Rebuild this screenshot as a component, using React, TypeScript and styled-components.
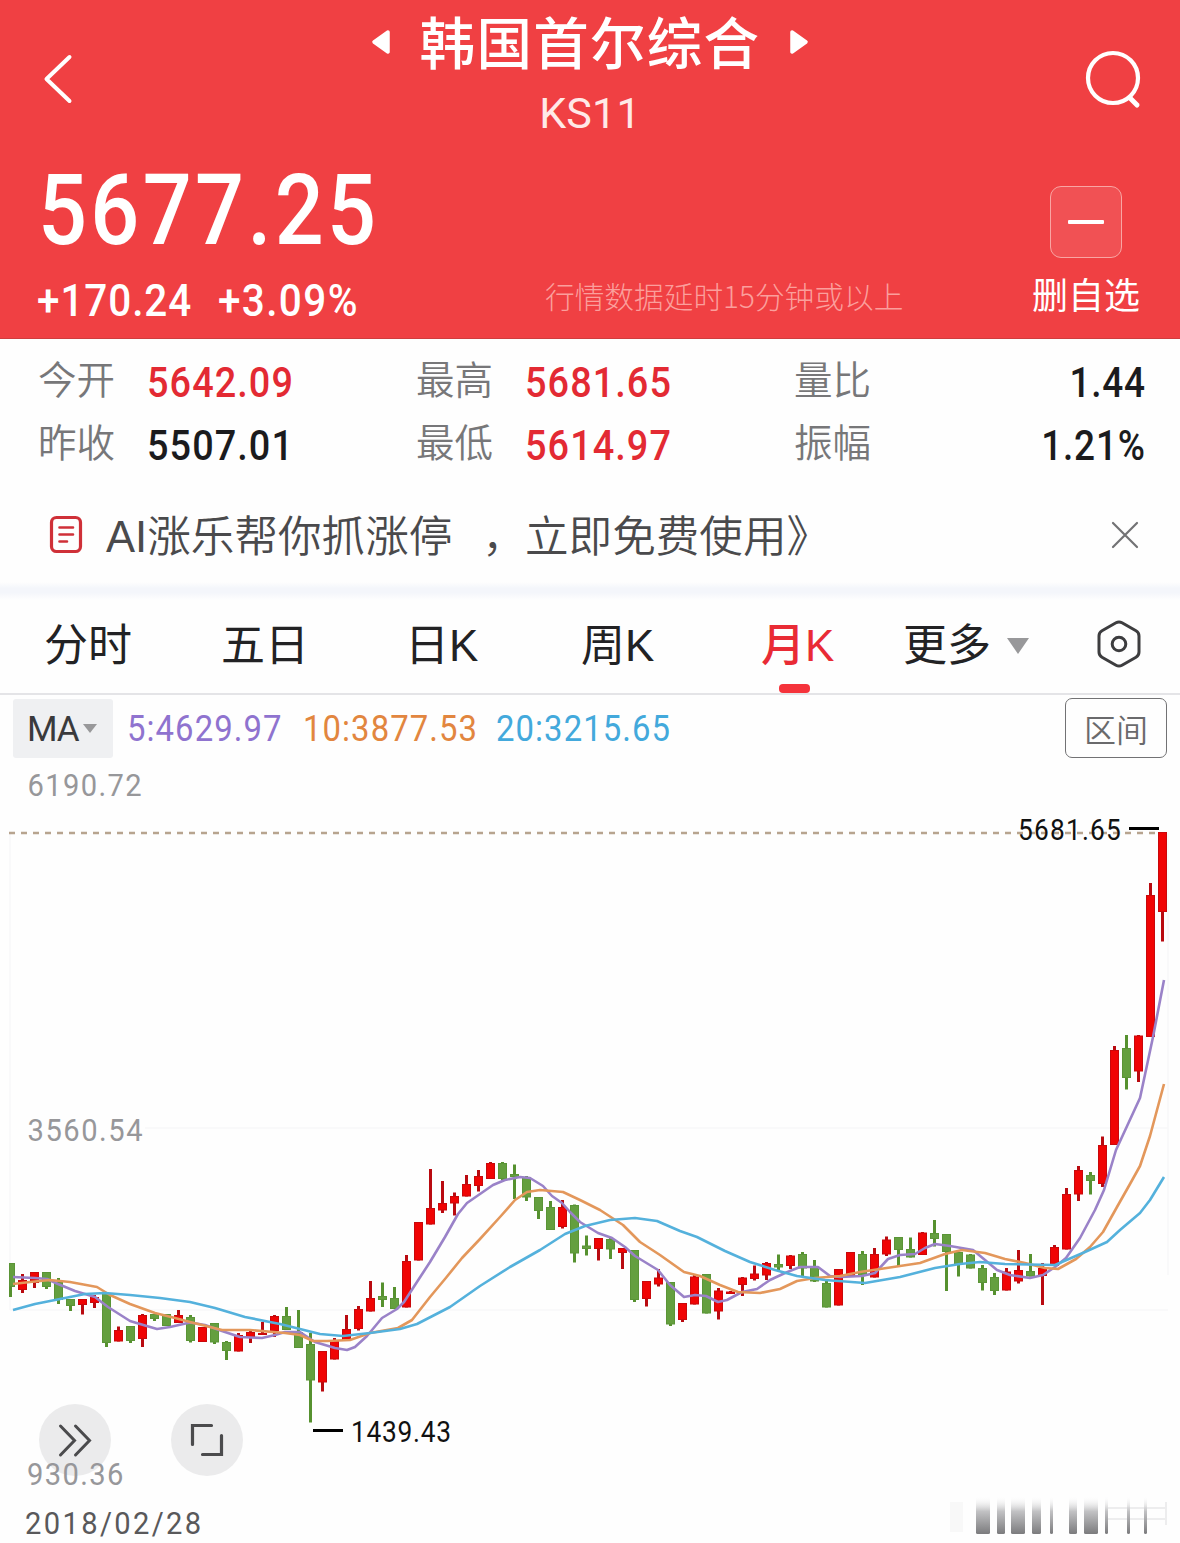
import React from "react";
import styled, { createGlobalStyle } from "styled-components";

const CJK = '"Noto Sans CJK SC", sans-serif';
const LATIN = 'Roboto, "Noto Sans CJK SC", sans-serif';

const GlobalStyle = createGlobalStyle`
  *, *::before, *::after { box-sizing: border-box; }
  body { margin: 0; background: #fefefe; font-family: ${CJK}; }
  button { border: 0; padding: 0; background: none; font: inherit; color: inherit; }
  svg { display: block; }
`;

const Page = styled.main`
  width: 1180px;
  height: 1543px;
  display: flex;
  flex-direction: column;
  overflow: hidden;
  background: #fefefe;
`;

const Header = styled.header`
  height: 339px;
  flex: none;
  color: #fff;
  background: #f04043;
  border-bottom: 1px solid #cf3d3e;
`;

/* Narrow, widely tracked figures used for every quote value. */
const Figure = styled.span<{ $squeeze: number; $track: number; $right?: boolean }>`
  display: block;
  white-space: nowrap;
  letter-spacing: ${(p) => p.$track}px;
  transform: scaleX(${(p) => p.$squeeze});
  transform-origin: ${(p) => (p.$right ? "right" : "left")} center;
`;

const TopBar = styled.div`
  height: 154px;
  display: flex;
  justify-content: space-between;
  padding: 0 38px;
`;

const IconButton = styled.button<{ $top: number; $inset?: number }>`
  align-self: flex-start;
  width: 58px;
  margin-top: ${(p) => p.$top}px;
  padding-left: ${(p) => p.$inset ?? 0}px;
`;

const TitleBlock = styled.div`
  display: flex;
  flex-direction: column;
  align-items: center;
`;

const TitleRow = styled.div`
  display: flex;
  align-items: flex-start;
  gap: 29px;
  height: 84px;

  svg { margin-top: 29px; }
`;

const Title = styled.h1`
  margin: 0;
  font: 500 55.5px/81px ${CJK};
  letter-spacing: 1.3px;
  white-space: nowrap;
`;

const Code = styled.div`
  font: 400 43px/58px ${LATIN};
  letter-spacing: 0.2px;
  color: #ffe9e7;
`;

const QuoteTop = styled.div`
  height: 112px;
  display: flex;
  justify-content: space-between;
  padding: 0 58px 0 38px;
`;

const Price = styled(Figure)`
  font: 500 98px/114px ${LATIN};
`;

const RemoveBox = styled.button`
  width: 72px;
  height: 72px;
  margin-top: 32px;
  display: grid;
  place-items: center;
  border: 1.5px solid #f9a5a3;
  border-radius: 11px;
  background: #f15154;
`;

const MinusBar = styled.span`
  width: 36px;
  height: 4px;
  border-radius: 1px;
  background: #fff;
`;

const QuoteBottom = styled.div`
  height: 68px;
  display: grid;
  grid-template-columns: 181px 327px 487px auto;
  padding-left: 37px;
`;

const Change = styled(Figure)`
  font: 500 44px/70px ${LATIN};
`;

const DelayNote = styled.div`
  font: 300 29.7px/60px ${CJK};
  color: #fb9f9c;
  white-space: nowrap;
`;

const RemoveLabel = styled.div`
  font: 400 36px/55px ${CJK};
  white-space: nowrap;
`;

const Stats = styled.section`
  height: 141px;
  flex: none;
  display: grid;
  grid-template-columns: 378px 378px 352px;
  grid-template-rows: 63px 63px;
  padding: 12px 34px 0 38px;
`;

const Stat = styled.div<{ $spread?: boolean }>`
  display: flex;
  justify-content: ${(p) => (p.$spread ? "space-between" : "flex-start")};
  gap: 32px;
`;

const StatLabel = styled.span`
  font: 350 38.5px/52px ${CJK};
  color: #777779;
`;

const StatValue = styled(Figure)<{ $up?: boolean }>`
  font: 500 42px/64px ${LATIN};
  color: ${(p) => (p.$up ? "#e32a33" : "#1b1b1d")};
`;

const Notice = styled.section`
  height: 102px;
  flex: none;
  display: flex;
  align-items: center;
  padding: 7px 39px 0 48px;
`;

const NoticeText = styled.div`
  flex: 1;
  display: flex;
  margin-left: 22px;
  padding-top: 5px;
  font: 350 43.6px/70px "Liberation Sans", ${CJK};
  color: #4a4a4c;
  white-space: nowrap;
`;

const Comma = styled.span`
  margin-left: 30px;
  margin-right: -1px;
`;

const Band = styled.div`
  height: 18px;
  flex: none;
  background: linear-gradient(#fefefe, #f4f6fb 35%, #f4f6fb 60%, #fefefe);
`;

const Tabs = styled.nav`
  height: 95px;
  flex: none;
  display: flex;
  align-items: stretch;
  border-bottom: 2px solid #e4e4e7;
  padding-left: 44px;
`;

const Tab = styled.button<{ $width: number; $active?: boolean }>`
  position: relative;
  width: ${(p) => p.$width}px;
  display: flex;
  align-items: center;
  padding-bottom: 2px;
  text-align: left;
  white-space: nowrap;
  font: ${(p) => (p.$active ? 500 : 400)} 44px/86px "Liberation Sans", ${CJK};
  color: ${(p) => (p.$active ? "#e92b35" : "#222224")};
`;

const Underline = styled.span`
  position: absolute;
  left: 18px;
  bottom: 0;
  width: 31px;
  height: 9px;
  border-radius: 4px;
  background: #f5333b;
`;

const Caret = styled.span<{ $w: number; $h: number; $gap: number }>`
  margin-left: ${(p) => p.$gap}px;
  border-left: ${(p) => p.$w / 2}px solid transparent;
  border-right: ${(p) => p.$w / 2}px solid transparent;
  border-top: ${(p) => p.$h}px solid #98989a;
`;

const SettingsIcon = styled.svg`
  margin-bottom: 4px;
`;

const Legend = styled.div`
  height: 64px;
  flex: none;
  display: flex;
  align-items: center;
  padding: 2px 13px 0;
`;

const MaPicker = styled.button`
  width: 100px;
  height: 59px;
  display: flex;
  align-items: center;
  margin-right: 14px;
  padding-left: 14px;
  border-radius: 3px;
  background: #eff0f2;
  font: 400 35px/59px ${LATIN};
  letter-spacing: -1.2px;
  color: #3a3a3c;
`;

const MaName = styled.span`
  padding-top: 2px;
`;

const MaCell = styled.span<{ $color: string; $width: number }>`
  width: ${(p) => p.$width}px;
  padding-top: 2px;
  font: 400 36.5px/60px ${LATIN};
  color: ${(p) => p.$color};
`;

const RangeButton = styled.button`
  width: 102px;
  height: 60px;
  margin-left: auto;
  border: 1.5px solid #727274;
  border-radius: 7px;
  font: 350 32px/54px ${CJK};
  color: #6a6a6c;
`;

const ChartArea = styled.section`
  position: relative;
  flex: 1;
`;

const RoundButton = styled.button<{ $left: number }>`
  position: absolute;
  left: ${(p) => p.$left}px;
  top: 645px;
  width: 72px;
  height: 72px;
  display: grid;
  place-items: center;
  border-radius: 50%;
  background: #ebebec;
`;

const ChartText = styled.text<{ $size: number; $track: number; $color: string }>`
  font: 400 ${(p) => p.$size}px ${LATIN};
  letter-spacing: ${(p) => p.$track}px;
  fill: ${(p) => p.$color};
`;

const FloorLabel = styled(Figure)`
  position: absolute;
  left: 27px;
  top: 695px;
  font: 400 32px/40px ${LATIN};
  color: #97979a;
`;

type Candle = [x: number, up: 0 | 1, high: number, top: number, bottom: number, low: number];

const candles: Candle[] = [
  [10.5, 0, 1263, 1263, 1287, 1297], [22.5, 1, 1274, 1280, 1290, 1293],
  [34.5, 1, 1272, 1272, 1283, 1288], [46.5, 0, 1272, 1272, 1287, 1289],
  [58.5, 0, 1278, 1282, 1300, 1304], [70.5, 0, 1299, 1299, 1306, 1311],
  [82.5, 1, 1299, 1299, 1305, 1314.5], [94.5, 1, 1295, 1297, 1303, 1308],
  [106.5, 0, 1293, 1293, 1343, 1347], [118.5, 1, 1326.5, 1330, 1341.5, 1341.5],
  [130.5, 0, 1326, 1326, 1341, 1343], [142.5, 1, 1314, 1315, 1339, 1347],
  [154.5, 0, 1314, 1314, 1319, 1321], [166.5, 0, 1314, 1314, 1326, 1326],
  [178.5, 1, 1310, 1315, 1323, 1323], [190.5, 0, 1315, 1317, 1341, 1342.5],
  [202.5, 1, 1327, 1327, 1342, 1342], [214.5, 0, 1323, 1323, 1342.5, 1344],
  [226.5, 0, 1341, 1342, 1351, 1360], [238.5, 1, 1333, 1335, 1351.5, 1351.5],
  [250.5, 1, 1330, 1332, 1338, 1343], [262.5, 1, 1322, 1333, 1335, 1335],
  [274.5, 1, 1315, 1316, 1331, 1337], [286.5, 0, 1307, 1316, 1330, 1330],
  [298.5, 0, 1310, 1332, 1348, 1348], [310.5, 0, 1333, 1344, 1380.5, 1422.5],
  [322.5, 1, 1351, 1351, 1382.5, 1391.5], [334.5, 1, 1338, 1340, 1359.5, 1359.5],
  [346.5, 1, 1315, 1329, 1341, 1341], [358.5, 1, 1306, 1309, 1329, 1330.5],
  [370.5, 1, 1281, 1298, 1311.5, 1311.5], [382.5, 0, 1282.5, 1296, 1300, 1307],
  [394.5, 0, 1287, 1298, 1309, 1309], [406.5, 1, 1255, 1261, 1307.5, 1307.5],
  [418.5, 1, 1222, 1222, 1260.5, 1260.5], [430.5, 1, 1169, 1208, 1224.5, 1224.5],
  [442.5, 1, 1181, 1203, 1210.5, 1213], [454.5, 1, 1192.5, 1196, 1203.5, 1215.5],
  [466.5, 1, 1175, 1184, 1196.5, 1196.5], [478.5, 1, 1170, 1176, 1186, 1191.5],
  [490.5, 1, 1162, 1163, 1179, 1179], [502.5, 0, 1162, 1163, 1179, 1180],
  [514.5, 0, 1164.5, 1174, 1177, 1199], [526.5, 0, 1176, 1177, 1197.5, 1201],
  [538.5, 0, 1197, 1197, 1211, 1219], [550.5, 0, 1201, 1207, 1230, 1230],
  [562.5, 1, 1200, 1207, 1227, 1228.5], [574.5, 0, 1204.5, 1205, 1253.5, 1262.5],
  [586.5, 0, 1235.5, 1245.5, 1249, 1255.5], [598.5, 1, 1238, 1238, 1249, 1260.5],
  [610.5, 0, 1238, 1239, 1249.5, 1259], [622.5, 1, 1248, 1248, 1253, 1269],
  [634.5, 0, 1250, 1250, 1300, 1302], [646.5, 1, 1281, 1281, 1299, 1306.5],
  [658.5, 1, 1269, 1277.5, 1284.5, 1286.5], [670.5, 0, 1282, 1282, 1324.5, 1326],
  [682.5, 1, 1303, 1303, 1320, 1322], [694.5, 1, 1275, 1276.5, 1304.5, 1304.5],
  [706.5, 0, 1274, 1274, 1313.5, 1313.5], [718.5, 1, 1288, 1290.5, 1311.5, 1319.5],
  [730.5, 1, 1291, 1291.5, 1294, 1294], [742.5, 1, 1277, 1277.5, 1285, 1296],
  [754.5, 1, 1265.5, 1273.5, 1279, 1280.5], [766.5, 1, 1262, 1263, 1275.5, 1280],
  [778.5, 0, 1254.5, 1264, 1267.5, 1270], [790.5, 1, 1255, 1255.5, 1266, 1269],
  [802.5, 0, 1252, 1254, 1268.5, 1277], [814.5, 0, 1260, 1267, 1281.5, 1282],
  [826.5, 0, 1281, 1283, 1307.5, 1307.5], [838.5, 1, 1269, 1269, 1305.5, 1305.5],
  [850.5, 1, 1252, 1252, 1276.5, 1277], [862.5, 0, 1251, 1254, 1276, 1285],
  [874.5, 1, 1248, 1254, 1277.5, 1277.5], [886.5, 1, 1236.5, 1239.5, 1254.5, 1256],
  [898.5, 0, 1237, 1237, 1250, 1266], [910.5, 0, 1237.5, 1249, 1257.5, 1257.5],
  [922.5, 1, 1232, 1232.5, 1255, 1255], [934.5, 0, 1220, 1233, 1239, 1246.5],
  [946.5, 0, 1234, 1234, 1252, 1291], [958.5, 0, 1252, 1252, 1265, 1276.5],
  [970.5, 0, 1254, 1254.5, 1268.5, 1268.5], [982.5, 0, 1265, 1268, 1283, 1290.5],
  [994.5, 0, 1273, 1277, 1291, 1295], [1006.5, 1, 1268, 1271.5, 1290.5, 1290.5],
  [1018.5, 1, 1250, 1270, 1281.5, 1283.5], [1030.5, 0, 1254, 1271, 1276.5, 1276.5],
  [1042.5, 1, 1263, 1268, 1276, 1305], [1054.5, 1, 1245, 1247, 1266, 1266],
  [1066.5, 1, 1188, 1194, 1249.5, 1249.5], [1078.5, 1, 1166, 1170, 1194.5, 1201],
  [1090.5, 0, 1172, 1175, 1181, 1194.5], [1102.5, 1, 1136.5, 1145, 1184, 1187],
  [1114.5, 1, 1046, 1050, 1145, 1145], [1126.5, 0, 1035, 1048, 1078, 1089.5],
  [1138.5, 1, 1035, 1035.5, 1071.5, 1082], [1150.5, 1, 883, 895, 1037, 1037],
  [1162.5, 1, 832, 832, 912, 941.5],
];

const averages = [
  {
    color: "#9a82c8",
    points:
      "13,1277 35,1278 47,1279 58,1284 75,1291 95,1297 108,1307 130,1321 145,1325.5 157,1329 170,1327 190,1322.5 205,1325 222,1331 240,1337 262,1338 275,1335 285,1332 300,1332 315,1342 335,1348 347,1350 355,1347 367,1336 382,1318 397,1309 404,1302 415,1285 430,1262 445,1237 458,1214 467,1203 480,1194 493,1185 505,1180 520,1177 530,1178 543,1186 552,1196 562,1203 570,1212 580,1222 598,1233 612,1238 625,1247 635,1256 658,1270 670,1285 684,1297 695,1295 706,1296 718,1302 727,1300 742,1292 757,1289 770,1280 785,1273 800,1267 818,1267 830,1276 840,1277 862,1276 875,1273 888,1259 900,1255 915,1254 925,1248 935,1244 950,1246 973,1250 985,1260 997,1270 1010,1275 1030,1278 1043,1275 1055,1267 1066,1258 1080,1238 1095,1210 1104,1190 1116,1150 1140,1098 1153,1037 1164,980",
  },
  {
    color: "#e3975b",
    points:
      "13,1284 30,1282 50,1280 70,1282 97,1287 110,1295 130,1304 155,1313 175,1318 190,1322 210,1327 222,1330 250,1330 285,1333 300,1335 313,1341 327,1341 350,1340 370,1333 398,1328 412,1320 430,1297 445,1279 462,1258 480,1239 500,1217 515,1200 527,1192 540,1190 563,1192 580,1200 600,1210 623,1225 640,1242 660,1255 684,1272 700,1276 720,1285 738,1292 760,1293 780,1289 797,1281 815,1278 840,1276 860,1272 880,1269 900,1266 920,1263 945,1254 962,1250 985,1253 1005,1259 1025,1263 1045,1268 1058,1269 1076,1259 1090,1247 1103,1232 1117,1207 1130,1184 1140,1166 1150,1136 1164,1084",
  },
  {
    color: "#54b1dc",
    points:
      "13,1310 35,1304 60,1299 85,1294 105,1293 130,1295 160,1298 190,1302 215,1308 245,1317 280,1324 300,1329 320,1334 343,1336 370,1333 400,1329 417,1324 450,1307 480,1286 510,1267 540,1250 565,1234 585,1226 610,1220 635,1218 657,1221 680,1231 697,1237 725,1251 750,1262 775,1270 797,1276 825,1280 865,1283 900,1277 935,1268 960,1264 980,1262 1005,1264 1055,1265 1085,1252 1107,1242 1120,1230 1140,1213 1150,1200 1164,1177",
  },
];

const smudges: [number, number][] = [
  [976, 14], [997, 8], [1011, 14], [1032, 9], [1050, 3],
  [1069, 8], [1084, 14], [1105, 3], [1127, 3], [1144, 3],
];

const stats = [
  { label: "今开", value: "5642.09", up: true },
  { label: "最高", value: "5681.65", up: true },
  { label: "量比", value: "1.44", spread: true },
  { label: "昨收", value: "5507.01" },
  { label: "最低", value: "5614.97", up: true },
  { label: "振幅", value: "1.21%", spread: true },
];

const maLines = [
  { text: "5:4629.97", color: "#8f73cf", width: 176 },
  { text: "10:3877.53", color: "#e2863f", width: 193 },
  { text: "20:3215.65", color: "#43a9dc", width: 200 },
];

const TitleArrow = ({ flip }: { flip?: boolean }) => (
  <svg width="20" height="26" viewBox="0 0 20 26">
    <path
      d={flip ? "M3 3 L17 13 L3 23 Z" : "M17 3 L3 13 L17 23 Z"}
      fill="#fff"
      stroke="#fff"
      strokeWidth="3.5"
      strokeLinejoin="round"
    />
  </svg>
);

const Chart = () => (
  <svg width="1180" height="784" viewBox="0 759 1180 784">
    <defs>
      <linearGradient id="fade" x1="0" y1="0" x2="0" y2="1">
        <stop offset="0" stopColor="#fefefe" stopOpacity="0" />
        <stop offset="0.4" stopColor="#c2c2c4" />
        <stop offset="1" stopColor="#7b7b7d" />
      </linearGradient>
    </defs>
    <path d="M10 833V1310M1168 833V1275M145 1128H1168M10 1310H1168" stroke="#f8f8f9" strokeWidth="1.5" fill="none" />
    <path d="M9 833H1160" stroke="#b7a48f" strokeWidth="2.5" strokeDasharray="6 6" />
    {candles.map(([x, up, high, top, bottom, low]) => (
      <g key={x}>
        <rect x={x - 1.5} y={high} width="3" height={low - high} fill={up ? "#b90a10" : "#56912f"} />
        <rect
          x={x < 12 ? 9.5 : x - 4}
          y={top + 0.5}
          width={x < 12 ? 5 : 8}
          height={Math.max(bottom - top - 1, 1)}
          fill={up ? "#f00404" : "#649f3f"}
          stroke={up ? "#c9080b" : "#5a9436"}
          strokeWidth="1"
        />
      </g>
    ))}
    {averages.map((line) => (
      <polyline
        key={line.color}
        points={line.points}
        fill="none"
        stroke={line.color}
        strokeWidth="2.6"
        strokeLinejoin="round"
      />
    ))}
    <path d="M1129 828.5H1159M313 1430.5H343" stroke="#000" strokeWidth="3" />
    <ChartText $size={28.6} $track={1.3} $color="#111" transform="translate(1018 839.5) scale(.92 1)">5681.65</ChartText>
    <ChartText $size={28.6} $track={0.8} $color="#111" transform="translate(351 1442) scale(.92 1)">1439.43</ChartText>
    <ChartText $size={32} $track={1.5} $color="#97979a" transform="translate(27.5 796) scale(.91 1)">6190.72</ChartText>
    <ChartText $size={32} $track={1.7} $color="#97979a" transform="translate(27.5 1141) scale(.91 1)">3560.54</ChartText>
    <ChartText $size={32} $track={2.6} $color="#59595b" transform="translate(25 1534) scale(.91 1)">2018/02/28</ChartText>
    <path d="M1108 1508H1166M1108 1519H1166M1166 1502V1525" stroke="#ededee" strokeWidth="2" fill="none" />
    <rect x="950" y="1502" width="13" height="30" fill="#f8f8f8" />
    {smudges.map(([x, width]) => (
      <rect key={x} x={x} y="1496" width={width} height="38" rx="1.5" fill="url(#fade)" />
    ))}
  </svg>
);

export default function App() {
  return (
    <Page>
      <GlobalStyle />
      <Header>
        <TopBar>
          <IconButton $top={53} $inset={4} aria-label="返回">
            <svg width="32" height="52" viewBox="0 0 32 52">
              <path d="M27.5 4 L4.5 26 L27.5 48" fill="none" stroke="#fff" strokeWidth="4" strokeLinecap="round" strokeLinejoin="round" />
            </svg>
          </IconButton>
          <TitleBlock>
            <TitleRow>
              <TitleArrow />
              <Title>韩国首尔综合</Title>
              <TitleArrow flip />
            </TitleRow>
            <Code>KS11</Code>
          </TitleBlock>
          <IconButton $top={50} aria-label="搜索">
            <svg width="58" height="60" viewBox="0 0 58 60">
              <circle cx="29" cy="28" r="25" fill="none" stroke="#fff" strokeWidth="4.2" />
              <path d="M46 48 L53 55" stroke="#fff" strokeWidth="5" strokeLinecap="round" />
            </svg>
          </IconButton>
        </TopBar>
        <QuoteTop>
          <Price $squeeze={0.88} $track={3.8}>5677.25</Price>
          <RemoveBox aria-label="删自选">
            <MinusBar />
          </RemoveBox>
        </QuoteTop>
        <QuoteBottom>
          <Change $squeeze={0.92} $track={1}>+170.24</Change>
          <Change $squeeze={0.92} $track={1.5}>+3.09%</Change>
          <DelayNote>行情数据延时15分钟或以上</DelayNote>
          <RemoveLabel>删自选</RemoveLabel>
        </QuoteBottom>
      </Header>

      <Stats>
        {stats.map((s) => (
          <Stat key={s.label} $spread={s.spread}>
            <StatLabel>{s.label}</StatLabel>
            <StatValue
              $up={s.up}
              $right={s.spread}
              $squeeze={s.spread ? 0.88 : 0.9}
              $track={s.spread ? 0.9 : 1.2}
            >
              {s.value}
            </StatValue>
          </Stat>
        ))}
      </Stats>

      <Notice>
        <svg width="36" height="42" viewBox="0 0 36 42">
          <rect x="3.5" y="3.5" width="29" height="34" rx="5" fill="none" stroke="#cf3038" strokeWidth="3.2" />
          <path d="M11.5 13.5H25M11.5 20.5H25M11.5 27.5H19" stroke="#cf3038" strokeWidth="2.6" strokeLinecap="round" />
        </svg>
        <NoticeText>
          <span>AI涨乐帮你抓涨停</span>
          <Comma>，</Comma>
          <span>立即免费使用》</span>
        </NoticeText>
        <svg width="32" height="32" viewBox="0 0 32 32">
          <path d="M4 4 L28 28 M28 4 L4 28" stroke="#727274" strokeWidth="2.2" strokeLinecap="round" />
        </svg>
      </Notice>
      <Band />

      <Tabs>
        <Tab $width={177}>分时</Tab>
        <Tab $width={184}>五日</Tab>
        <Tab $width={176}>日K</Tab>
        <Tab $width={180}>周K</Tab>
        <Tab $width={142} $active>
          月K
          <Underline />
        </Tab>
        <Tab $width={193}>
          更多
          <Caret $w={22} $h={16} $gap={16} />
        </Tab>
        <Tab $width={46} aria-label="设置">
          <SettingsIcon width="46" height="50" viewBox="0 0 46 50">
            <path d="M20 3.8 Q23 2 26 3.8 L40 11.8 Q43 13.5 43 17 V33 Q43 36.5 40 38.2 L26 46.2 Q23 48 20 46.2 L6 38.2 Q3 36.5 3 33 V17 Q3 13.5 6 11.8 Z" fill="none" stroke="#3d3d3f" strokeWidth="3" />
            <circle cx="23" cy="25" r="6.8" fill="none" stroke="#3d3d3f" strokeWidth="3" />
          </SettingsIcon>
        </Tab>
      </Tabs>

      <Legend>
        <MaPicker>
          <MaName>MA</MaName>
          <Caret $w={15} $h={9} $gap={5} />
        </MaPicker>
        {maLines.map((m) => (
          <MaCell key={m.text} $color={m.color} $width={m.width}>
            <Figure $squeeze={0.9} $track={1.2}>{m.text}</Figure>
          </MaCell>
        ))}
        <RangeButton>区间</RangeButton>
      </Legend>

      <ChartArea>
        <Chart />
        <RoundButton $left={39} aria-label="快进">
          <svg width="36" height="36" viewBox="0 0 36 36">
            <path d="M3.5 4 L17.5 18.5 L3.5 33 M18.5 4 L32.5 18.5 L18.5 33" fill="none" stroke="#4b4b4d" strokeWidth="3" strokeLinecap="round" strokeLinejoin="miter" />
          </svg>
        </RoundButton>
        <RoundButton $left={171} aria-label="全屏">
          <svg width="36" height="36" viewBox="0 0 36 36">
            <path d="M22.5 3.5 H3.5 V22.5 M13.5 32.5 H32.5 V13.5" fill="none" stroke="#4b4b4d" strokeWidth="3.2" strokeLinecap="round" />
          </svg>
        </RoundButton>
        <FloorLabel $squeeze={0.91} $track={1.5}>930.36</FloorLabel>
      </ChartArea>
    </Page>
  );
}
